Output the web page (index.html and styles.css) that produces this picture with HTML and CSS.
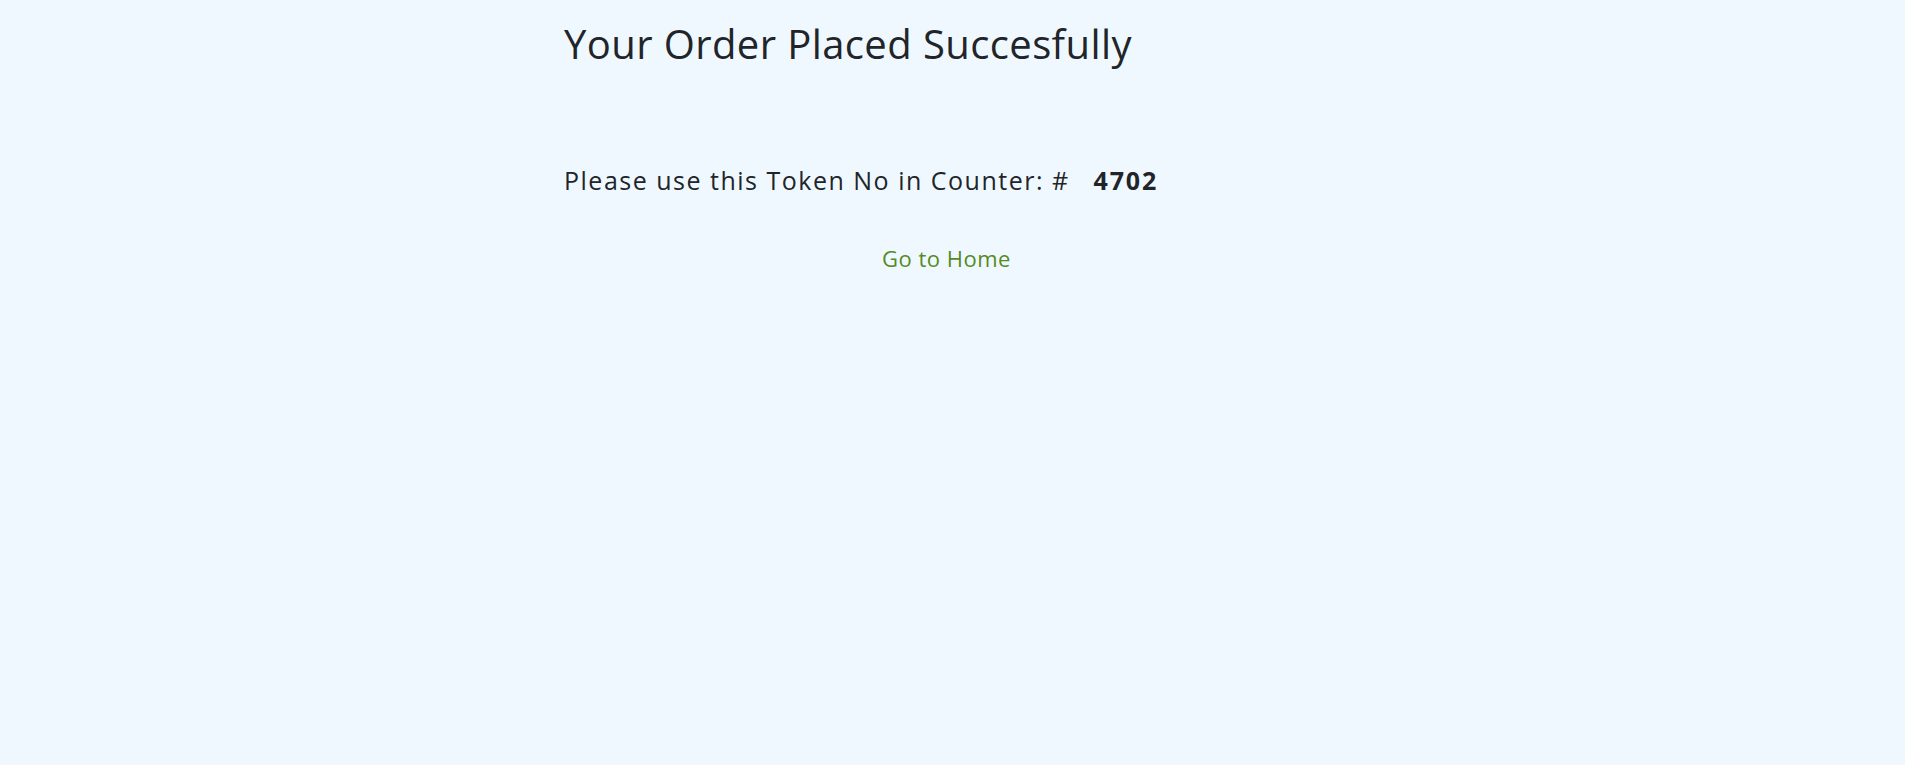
FILE: index.html
```html
<!DOCTYPE html>
<html lang="en">
<head>
<meta charset="utf-8">
<title>Order Placed</title>
<link rel="stylesheet" href="styles.css">
</head>
<body>
<main class="page">
  <h1 class="title">Your Order Placed Succesfully</h1>
  <p class="token">Please use this Token No in Counter: # <strong class="token-no">4702</strong></p>
  <div class="home-row"><a class="home-link" href="#">Go to Home</a></div>
</main>
</body>
</html>
```
FILE: styles.css
```css
html, body {
  margin: 0;
  padding: 0;
  background: #f0f8ff;
}
body {
  font-family: "Open Sans", "Noto Sans", sans-serif;
  color: #212529;
  height: 765px;
}
.page {
  width: 777px;
  margin: 0 auto;
  display: flex;
  flex-direction: column;
}
.title {
  font-weight: 400;
  font-size: 40px;
  line-height: 48px;
  letter-spacing: 0.4px;
  margin: 20px 0 0 0;
}
.token {
  font-size: 25px;
  line-height: 30px;
  letter-spacing: 1.5px;
  margin: 97px 0 0 0;
}
.token-no {
  font-weight: 700;
  margin-left: 16px;
  letter-spacing: 1.8px;
}
.home-row {
  margin-top: 50px;
  font-size: 22px;
  line-height: 26px;
  text-align: center;
  padding-right: 12px;
}
.home-link {
  color: #558b1f;
  text-decoration: none;
  letter-spacing: 0.5px;
}
```
